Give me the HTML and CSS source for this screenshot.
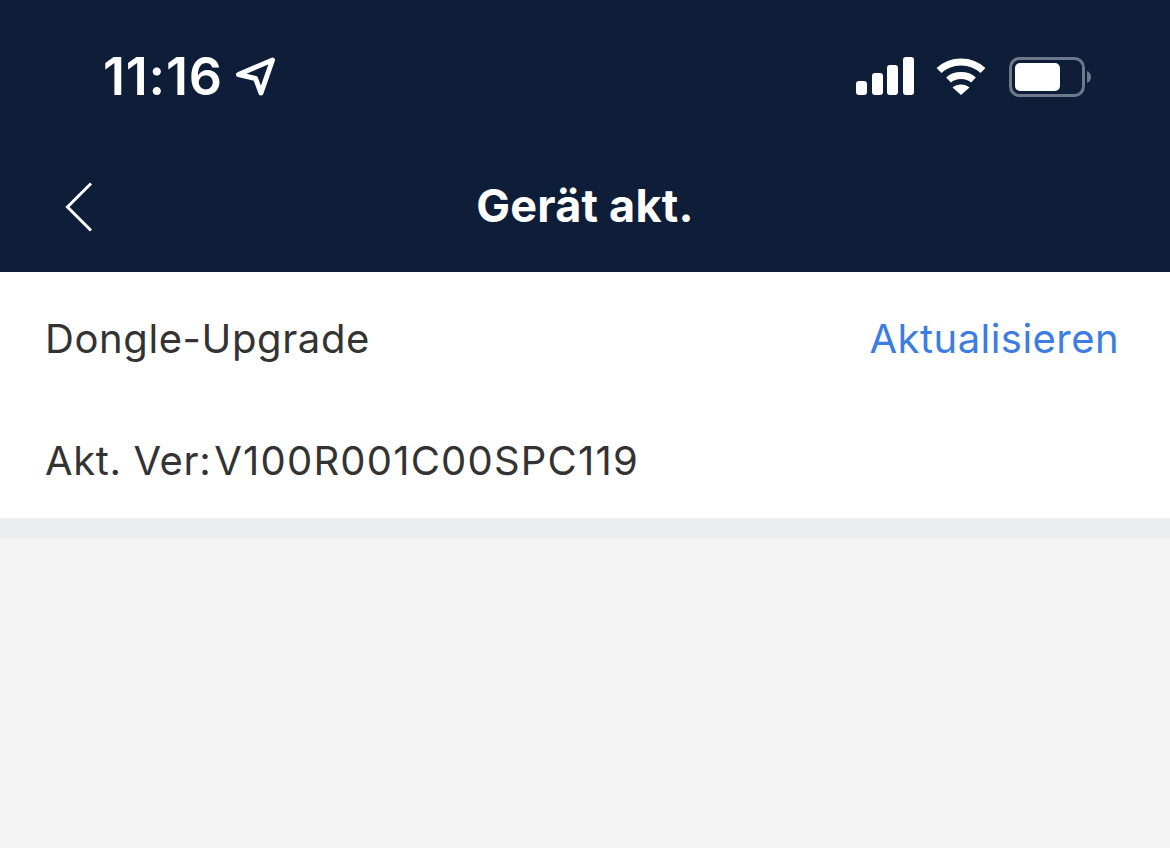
FILE: index.html
```html
<!DOCTYPE html>
<html lang="de">
<head>
<meta charset="utf-8">
<title>Gerät akt.</title>
<link rel="stylesheet" href="styles.css">
</head>
<body>
<div class="app">
  <header class="header">
    <div class="status">
      <div class="status-left">
        <span class="time">11:16</span>
        <svg class="loc" width="42" height="42" viewBox="0 0 42 42"><path d="M3.500 19.500 37.500 5 26 38 20.500 23.500Z" fill="none" stroke="#fff" stroke-width="5" stroke-linejoin="round"/></svg>
      </div>
      <div class="status-right">
        <svg class="signal" width="58" height="38" viewBox="0 0 58 38"><rect x="0" y="24" width="11" height="14" rx="3" fill="#fff"/><rect x="16" y="16" width="11" height="22" rx="3" fill="#fff"/><rect x="31" y="8" width="11" height="30" rx="3" fill="#fff"/><rect x="47" y="0" width="11" height="38" rx="3" fill="#fff"/></svg>
        <svg class="wifi" width="50" height="38" viewBox="0 0 50 38"><path d="M3 13.500C15 2 35 2 47 13.500" fill="none" stroke="#fff" stroke-width="7"/><path d="M12.500 23C19 17 31 17 37.500 23" fill="none" stroke="#fff" stroke-width="7"/><path d="M25 38 16.500 30.500C21 26.500 29 26.500 33.500 30.500Z" fill="#fff"/></svg>
        <svg class="battery" width="82" height="40" viewBox="0 0 82 40"><rect x="1.500" y="1.500" width="73" height="37" rx="9" fill="none" stroke="#6d788c" stroke-width="3"/><rect x="6" y="6" width="45" height="28" rx="5" fill="#fff"/><path d="M78 14C80.500 15 82 17 82 20S80.500 25 78 26Z" fill="#6d788c"/></svg>
      </div>
    </div>
    <nav class="nav">
      <svg class="back" width="28" height="50" viewBox="0 0 28 50"><path d="M26 1.500 2.500 25 26 48.500" fill="none" stroke="#fff" stroke-width="3"/></svg>
      <h1 class="title">Gerät akt.</h1>
    </nav>
  </header>
  <section class="card">
    <div class="row">
      <span class="label">Dongle-Upgrade</span>
      <span class="action">Aktualisieren</span>
    </div>
    <div class="row row-version">
      <span class="label">Akt. Ver:<span class="version">V100R001C00SPC119</span></span>
    </div>
  </section>
  <div class="band"></div>
</div>
</body>
</html>
```
FILE: styles.css
```css
* { box-sizing: border-box; }
html, body { margin: 0; padding: 0; }
body { background: #f4f4f5; font-family: Inter, "Liberation Sans", sans-serif; }
.app { width: 1170px; height: 848px; overflow: hidden; display: flex; flex-direction: column; }
.header { background: #0e1e38; height: 272px; color: #fff; display: flex; flex-direction: column; flex: none; }
.status { height: 142px; padding: 47px 79px 0 103px; display: flex; justify-content: space-between; align-items: flex-start; }
.status-left { display: flex; align-items: center; gap: 12px; height: 60px; }
.time { font-size: 52px; font-weight: 600; letter-spacing: 0.8px; line-height: 60px; }
.loc { margin-top: -2px; }
.status-right { display: flex; align-items: flex-start; padding-top: 10px; }
.wifi { margin-left: 22px; }
.battery { margin-left: 23px; }
.nav { position: relative; height: 130px; display: flex; align-items: flex-start; justify-content: center; }
.back { position: absolute; left: 65px; top: 40px; }
.title { margin: 36px 0 0; font-size: 45px; line-height: 56px; font-weight: 700; letter-spacing: 0.2px; }
.card { background: #fff; height: 246px; padding: 0 51px 0 45px; color: #333; flex: none; }
.row { display: flex; justify-content: space-between; align-items: center; height: 132px; padding-top: 2px; }
.row-version { height: 114px; padding-top: 0; }
.label { font-size: 40px; line-height: 50px; letter-spacing: 0.6px; }
.version { margin-left: 3px; letter-spacing: 1.2px; }
.action { font-size: 40px; line-height: 50px; letter-spacing: 0.45px; color: #3b7de3; }
.band { height: 21px; background: #ecedef; flex: none; }
```
